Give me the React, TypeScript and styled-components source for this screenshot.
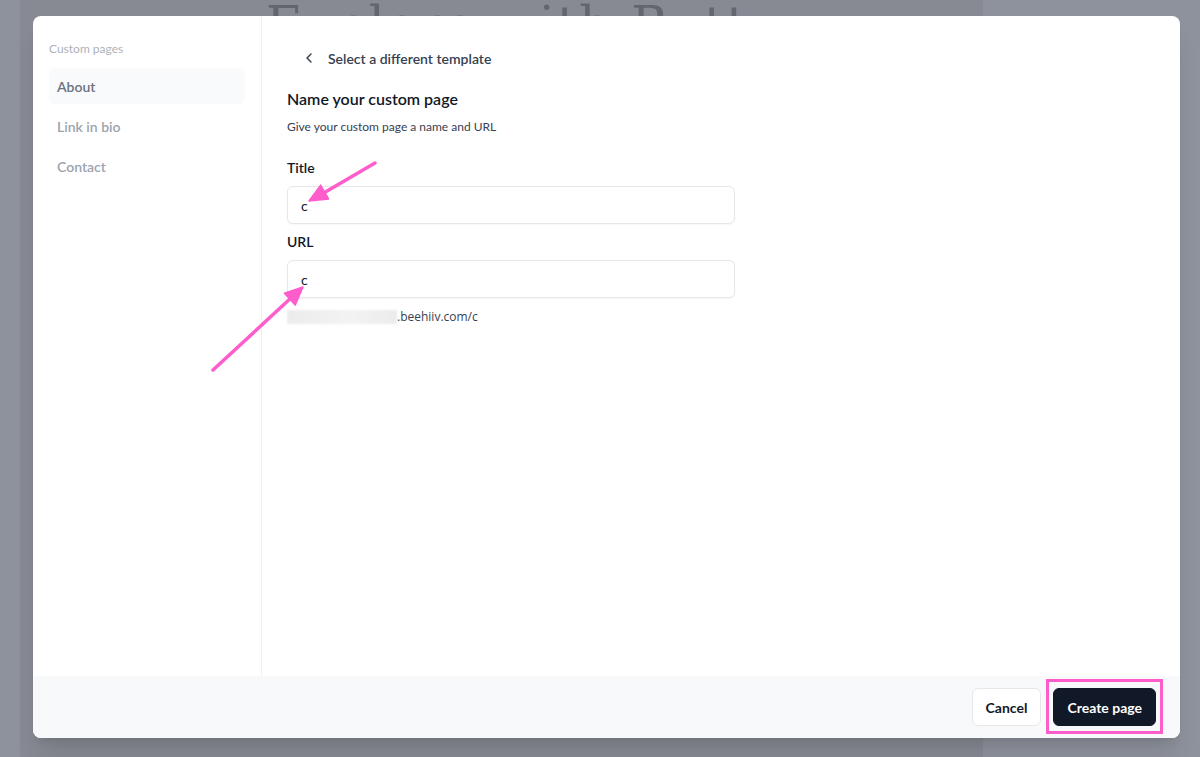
import React from "react";
import styled, { createGlobalStyle } from "styled-components";

const GlobalStyle = createGlobalStyle`
    html, body {
        margin: 0;
        padding: 0;
        background: #8e929c;
    }
    * {
        box-sizing: border-box;
    }
`;

const Root = styled.div`
    position: relative;
    width: 1200px;
    height: 757px;
    overflow: hidden;
    font-family: Lato, "Noto Sans", sans-serif;
`;

// the dashboard page that sits dimmed behind the dialog
const BackPage = styled.div`
    margin-left: 20px;
    width: 963px;
    height: 757px;
    background: #878a93;
`;

const BackHeader = styled.div`
    height: 16px;
    overflow: hidden;
    padding-left: 246px;
`;

const BackTitle = styled.h1`
    margin: -5px 0 0;
    font-family: "DejaVu Serif", "Liberation Serif", serif;
    font-weight: 400;
    font-size: 50px;
    line-height: 60px;
    letter-spacing: 2px;
    white-space: nowrap;
    color: #62666f;
`;

const Backdrop = styled.div`
    position: absolute;
    inset: 0;
    display: flex;
    padding: 16px 20px 19px 33px;
`;

const Modal = styled.div`
    flex: 1;
    display: flex;
    flex-direction: column;
    background: #ffffff;
    border-radius: 8px;
    overflow: hidden;
    box-shadow: 0 20px 25px -5px rgba(0, 0, 0, 0.1), 0 8px 10px -6px rgba(0, 0, 0, 0.1);
`;

const Body = styled.div`
    flex: 1;
    display: flex;
`;

const Sidebar = styled.nav`
    width: 229px;
    border-right: 1px solid #f0f1f3;
    padding: 24px 16px;
    display: flex;
    flex-direction: column;
    gap: 4px;
`;

const SidebarLabel = styled.div`
    font-size: 12px;
    line-height: 18px;
    color: #aeb2ba;
    margin-bottom: 6px;
`;

const SidebarItem = styled.div<{ $active?: boolean }>`
    height: 36px;
    display: flex;
    align-items: center;
    padding: 0 8px;
    border-radius: 6px;
    font-size: 14px;
    font-weight: 600;
    color: ${(p) => (p.$active ? "#6b7280" : "#9ca3af")};
    background: ${(p) => (p.$active ? "#f9fafb" : "transparent")};
`;

const Main = styled.main`
    flex: 1;
    padding: 24px 25px;
    display: flex;
    flex-direction: column;
    align-items: flex-start;
`;

const BackButton = styled.button`
    height: 36px;
    display: flex;
    align-items: center;
    gap: 11px;
    padding: 0 14px;
    border: none;
    background: none;
    font-family: inherit;
    font-size: 14px;
    font-weight: 600;
    color: #374151;
    margin-bottom: 11px;
`;

const Heading = styled.h2`
    margin: 0;
    font-size: 16px;
    line-height: 24px;
    font-weight: 600;
    color: #111827;
`;

const Subtitle = styled.p`
    margin: 8px 0 23px;
    font-size: 12px;
    line-height: 16px;
    color: #374151;
`;

const Field = styled.div`
    width: 448px;
    display: flex;
    flex-direction: column;
    gap: 8px;
    & + & {
        margin-top: 8px;
    }
`;

const Label = styled.label`
    font-size: 14px;
    line-height: 20px;
    font-weight: 600;
    color: #111827;
`;

const Input = styled.input`
    height: 38px;
    width: 100%;
    padding: 0 13px;
    border: 1px solid #e5e7eb;
    border-radius: 6px;
    box-shadow: 0 1px 2px rgba(0, 0, 0, 0.04);
    font-family: inherit;
    font-size: 14px;
    color: #111827;
    outline: none;
`;

const Hint = styled.div`
    margin-top: 3px;
    display: flex;
    align-items: center;
    font-family: "Open Sans", "Noto Sans", sans-serif;
    font-size: 12px;
    line-height: 16px;
    color: #374151;
`;

const Redacted = styled.span`
    width: 110px;
    height: 14px;
    background: linear-gradient(90deg, #ececec, #f3f3f3 60%, #ebebeb);
    filter: blur(1px);
`;

const Footer = styled.footer`
    height: 62px;
    background: #f8f9fb;
    display: flex;
    align-items: center;
    justify-content: flex-end;
    gap: 12px;
    padding: 0 24px;
`;

const Button = styled.button<{ $primary?: boolean }>`
    height: 38px;
    padding: 0 13px;
    border-radius: 6px;
    font-family: inherit;
    font-size: 14px;
    font-weight: 700;
    border: 1px solid ${(p) => (p.$primary ? "#111827" : "#e5e7eb")};
    background: ${(p) => (p.$primary ? "#111827" : "#ffffff")};
    color: ${(p) => (p.$primary ? "#ffffff" : "#111827")};
`;

// square pink annotation frame drawn round the primary button
const HighlightFrame = styled.span`
    display: inline-flex;
    margin: -9px -7px -8px;
    padding: 6px 4px 5px;
    border: 3px solid #ff5ccc;
`;

const Annotations = styled.svg`
    position: absolute;
    inset: 0;
    pointer-events: none;
`;

function ChevronLeft() {
    return (
        <svg width="16" height="16" viewBox="0 0 24 24" fill="none" stroke="#374151" strokeWidth="2.2"
             strokeLinecap="round" strokeLinejoin="round">
            <path d="m15 18-6-6 6-6"/>
        </svg>
    );
}

function Arrows() {
    const pink = "#ff5ccc";
    return (
        <Annotations width="1200" height="757" viewBox="0 0 1200 757">
            <line x1="375" y1="163" x2="322" y2="194" stroke={pink} strokeWidth="3.5" strokeLinecap="round"/>
            <polygon points="309,201 328.6,198.9 320.6,185.1" fill={pink} stroke={pink} strokeWidth="1.5"
                     strokeLinejoin="round"/>
            <line x1="213" y1="370" x2="292" y2="297" stroke={pink} strokeWidth="3.5" strokeLinecap="round"/>
            <polygon points="303,287 295.2,305.1 284.4,293.3" fill={pink} stroke={pink} strokeWidth="1.5"
                     strokeLinejoin="round"/>
        </Annotations>
    );
}

export default function App() {
    return (
        <Root>
            <GlobalStyle/>
            <BackPage>
                <BackHeader>
                    <BackTitle>Explore with Butt</BackTitle>
                </BackHeader>
            </BackPage>
            <Backdrop>
                <Modal>
                    <Body>
                        <Sidebar>
                            <SidebarLabel>Custom pages</SidebarLabel>
                            <SidebarItem $active>About</SidebarItem>
                            <SidebarItem>Link in bio</SidebarItem>
                            <SidebarItem>Contact</SidebarItem>
                        </Sidebar>
                        <Main>
                            <BackButton>
                                <ChevronLeft/>
                                Select a different template
                            </BackButton>
                            <Heading>Name your custom page</Heading>
                            <Subtitle>Give your custom page a name and URL</Subtitle>
                            <Field>
                                <Label>Title</Label>
                                <Input defaultValue="c"/>
                            </Field>
                            <Field>
                                <Label>URL</Label>
                                <Input defaultValue="c"/>
                                <Hint>
                                    <Redacted/>
                                    .beehiiv.com/c
                                </Hint>
                            </Field>
                        </Main>
                    </Body>
                    <Footer>
                        <Button>Cancel</Button>
                        <HighlightFrame>
                            <Button $primary>Create page</Button>
                        </HighlightFrame>
                    </Footer>
                </Modal>
            </Backdrop>
            <Arrows/>
        </Root>
    );
}
